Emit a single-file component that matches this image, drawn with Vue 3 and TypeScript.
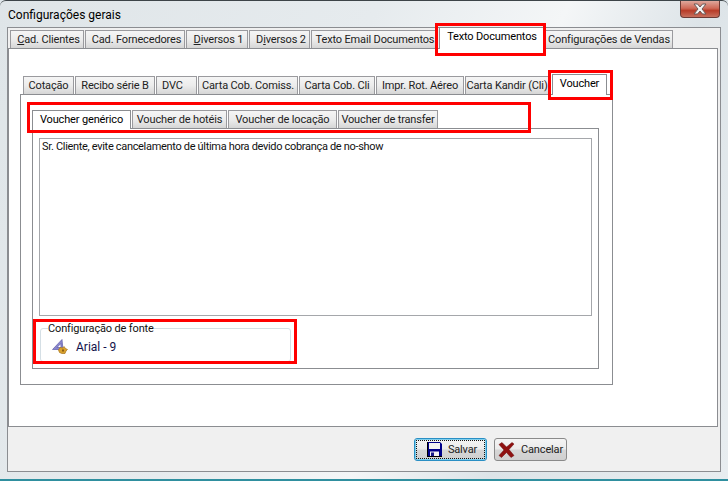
<script setup lang="ts">
interface Tab { label: string; w: number; key?: string; pre?: string; post?: string; active?: boolean; gap?: number; cls?: string }
const mainTabs: Tab[] = [
  { label: '', pre: '', key: 'C', post: 'ad. Clientes', w: 74 },
  { label: 'Cad. Fornecedores', w: 100 },
  { label: '', pre: '', key: 'D', post: 'iversos 1', w: 62 },
  { label: '', pre: 'D', key: 'i', post: 'versos 2', w: 61 },
  { label: 'Texto Email Documentos', w: 125 },
  { label: 'Texto Documentos', w: 106, active: true, gap: 3 },
  { label: 'Configurações de Vendas', w: 128, gap: 0 },
]
const subTabs: Tab[] = [
  { label: 'Cotação', w: 51 },
  { label: 'Recibo série B', w: 80 },
  { label: 'DVC', w: 41, cls: 'start' },
  { label: 'Carta Cob. Comiss.', w: 100 },
  { label: 'Carta Cob. Cli', w: 76 },
  { label: 'Impr. Rot. Aéreo', w: 88 },
  { label: 'Carta Kandir (Cli)', w: 84 },
  { label: 'Voucher', w: 55, active: true, gap: 3 },
]
const voucherTabs: Tab[] = [
  { label: 'Voucher genérico', w: 99, active: true, gap: 0 },
  { label: 'Voucher de hotéis', w: 95 },
  { label: 'Voucher de locação', w: 109 },
  { label: 'Voucher de transfer', w: 100 },
]
function tabStyle(t: Tab) {
  return { width: t.w + 'px', marginLeft: (t.gap ?? 1) + 'px' }
}
</script>

<template>
  <div class="window">
    <div class="titlebar">
      <span class="title">Configurações gerais</span>
      <button class="close" aria-label="Fechar">
        <svg width="16" height="12" viewBox="0 0 16 12">
          <path d="M2 1h3.500L8 4l2.500-3H14L10 6l4 5h-3.500L8 8l-2.500 3H2l4-5z" fill="#f4f4f4" stroke="#6b5a58" stroke-width="1"/>
        </svg>
      </button>
    </div>
    <div class="client">
      <div class="tabs tabs-main">
        <div v-for="t in mainTabs" :key="t.w" class="tab" :class="{ active: t.active }" :style="tabStyle(t)">
          <span v-if="t.key">{{ t.pre }}<u>{{ t.key }}</u>{{ t.post }}</span>
          <span v-else>{{ t.label }}</span>
        </div>
      </div>
      <div class="page page-main">
        <div class="sub">
          <div class="tabs tabs-sub">
            <div v-for="t in subTabs" :key="t.label" class="tab" :class="[t.cls, { active: t.active }]" :style="tabStyle(t)">{{ t.label }}</div>
          </div>
          <div class="page page-sub">
            <div class="tabs tabs-voucher">
              <div v-for="t in voucherTabs" :key="t.label" class="tab" :class="{ active: t.active }" :style="tabStyle(t)">{{ t.label }}</div>
            </div>
            <div class="page page-voucher">
              <div class="memo">Sr. Cliente, evite cancelamento de última hora devido cobrança de no-show</div>
              <fieldset class="group">
                <legend>Configuração de fonte</legend>
                <div class="font-row">
                  <svg width="16" height="15" viewBox="0 0 16 15">
                    <path d="M0.500 10.500 L10 0.500 L11 10.500z M5 8.500 L8.800 4.500 L9 8.500z" fill="#8a86cf" fill-rule="evenodd" stroke="#5f5ca8" stroke-width=".7"/>
                    <path d="M6.500 11 L8 8.500 L11 9 L12 7.500 L13.500 9.500 L15.500 10.500 L14 12 L13 14.500 L10 14.500 L7.500 13.500z" fill="#d9a22e" stroke="#a8741a" stroke-width=".7"/>
                    <rect x="10" y="10.500" width="2" height="2" fill="#8a5c12"/>
                  </svg>
                  <span>Arial - 9</span>
                </div>
              </fieldset>
            </div>
          </div>
        </div>
      </div>
      <div class="footer">
        <button class="btn focus">
          <span class="inner">
            <svg width="15" height="15" viewBox="0 0 15 15">
              <path d="M0 0h13l2 2v13H0z" fill="#00008a"/>
              <rect x="2" y="1" width="11" height="6" fill="#f2f2f2"/>
              <rect x="3" y="9.500" width="9" height="5.500" fill="#f2f2f2"/>
              <rect x="4" y="10.500" width="3" height="4.500" fill="#1a1a8a"/>
              <path d="M0 0h1v15H0zM0 14h15v1H0z" fill="#000"/>
            </svg>
            <span>Salvar</span>
          </span>
        </button>
        <button class="btn">
          <span class="inner">
            <svg width="17" height="16" viewBox="0 0 17 16">
              <path d="M1 2.500 L4 0.500 L8.500 5 L14 0.500 L16 2 L11 7.500 L16 13.500 L13 15.500 L8.500 10.500 L3.500 15.500 L1 13.500 L6 8z" fill="#8f1111" stroke="#6a0a0a" stroke-width=".5"/>
            </svg>
            <span>Cancelar</span>
          </span>
        </button>
      </div>
    </div>
    <div class="mark mark-a"></div>
    <div class="mark mark-b"></div>
    <div class="mark mark-c"></div>
    <div class="mark mark-d"></div>
  </div>
</template>

<style>
html, body { margin: 0; padding: 0; background: #dfe6ea; }
</style>

<style scoped>
.window {
  position: relative;
  box-sizing: border-box;
  width: 728px;
  height: 481px;
  padding: 0 7px 7px;
  display: flex;
  flex-direction: column;
  overflow: hidden;
  border-radius: 6px 6px 0 0;
  border-top: 1px solid #3d4448;
  border-bottom: 2px solid #2f8f9f;
  background: linear-gradient(115deg, #dfe5e8 0%, #e6ebee 40%, #f4f6f7 60%, #dde4e8 75%, #e8edf0 100%);
  font-family: Roboto, "Liberation Sans", Arial, sans-serif;
  font-size: 11px;
  letter-spacing: -0.15px;
  color: #111;
}
.titlebar {
  height: 26px;
  flex: none;
  display: flex;
  justify-content: space-between;
  align-items: flex-start;
}
.title {
  margin: 7px 0 0 1px;
  font-size: 12px;
  letter-spacing: 0;
  line-height: 14px;
  color: #000;
}
.close {
  box-sizing: border-box;
  width: 40px;
  height: 17px;
  margin: 0 1px 0 0;
  padding: 0;
  display: flex;
  align-items: center;
  justify-content: center;
  border: 1px solid #6d3a34;
  border-top: 0;
  border-radius: 0 0 4px 4px;
  background: linear-gradient(#dfa79c 0%, #cf6a58 45%, #b83c28 60%, #c8705e 100%);
}
.client {
  box-sizing: border-box;
  height: 447px;
  display: flex;
  flex-direction: column;
  border: 1px solid #8b8d91;
  background: #f0f0f0;
}
.tabs {
  display: flex;
  align-items: flex-end;
  flex: none;
  position: relative;
  z-index: 1;
}
.tabs-main { height: 20px; padding-left: 1px; }
.tabs-main .tab:not(.active):not(:last-child) { padding-left: 3px; }
.tabs-sub { height: 18px; padding-left: 2px; }
.tabs-voucher { height: 18px; }
.tab {
  box-sizing: border-box;
  height: 18px;
  margin-bottom: 0;
  border: 1px solid #9a9a9e;
  border-bottom: 0;
  background: linear-gradient(#f5f5f5 0%, #ececec 50%, #d6d6d6 100%);
  line-height: 18px;
  text-align: center;
  white-space: nowrap;
  overflow: hidden;
  color: #222;
}
.tab.start { text-align: left; padding-left: 5px; }
.tab.active {
  height: 22px;
  margin-bottom: -1px;
  background: #fff;
  border-color: #8b8d91;
  line-height: 18px;
  color: #000;
}
.tabs-voucher .tab.active { height: 19px; }
.tabs-sub .tab.active { height: 21px; }
.page {
  box-sizing: border-box;
  border: 1px solid #8b8d91;
  background: #fff;
}
.page-main {
  width: 710px;
  height: 379px;
  padding: 27px 0 0 11px;
}
.sub { width: 593px; }
.page-sub {
  height: 291px;
  padding: 15px 0 0 11px;
}
.page-voucher {
  width: 567px;
  height: 241px;
  padding: 9px 0 0 6px;
}
.memo {
  box-sizing: border-box;
  width: 553px;
  height: 178px;
  padding: 1px 2px;
  border: 1px solid #a5a7ab;
  line-height: 14px;
  letter-spacing: -0.32px;
  color: #111;
}
.group {
  box-sizing: border-box;
  width: 251px;
  height: 40px;
  margin: 6px 0 0 1px;
  padding: 0 0 0 11px;
  border: 1px solid #d5dfe5;
  border-radius: 3px;
}
.group legend {
  padding: 0;
  margin-left: -4px;
  line-height: 13px;
  color: #111;
}
.font-row {
  display: flex;
  align-items: center;
  gap: 8px;
  margin-top: 4px;
  font-size: 12px;
  letter-spacing: 0;
  color: #12124a;
}
.footer {
  flex: 1;
  display: flex;
  gap: 7px;
  padding: 11px 0 0 406px;
}
.btn {
  box-sizing: border-box;
  width: 73px;
  height: 23px;
  padding: 0;
  border: 1px solid #8a8a8a;
  border-radius: 3px;
  background: linear-gradient(#f4f4f4 0%, #ebebeb 48%, #d6d6d6 52%, #cfcfcf 100%);
  font: inherit;
  letter-spacing: inherit;
  color: #222;
}
.btn.focus {
  border: 1px solid #2a8fc4;
  box-shadow: inset 0 0 0 1px #7fd0ee;
}
.btn.focus .inner { outline: 1px dotted #111; outline-offset: -2px; padding-left: 3px; }
.inner {
  box-sizing: border-box;
  display: flex;
  align-items: center;
  justify-content: center;
  gap: 6px;
  height: 100%;
}
.mark {
  position: absolute;
  box-sizing: border-box;
  border: 3px solid #f00;
  z-index: 5;
  pointer-events: none;
}
.mark-a { left: 435px; top: 22px; width: 111px; height: 33px; }
.mark-b { left: 548px; top: 69px; width: 65px; height: 30px; }
.mark-c { left: 27px; top: 101px; width: 504px; height: 31px; }
.mark-d { left: 33px; top: 318px; width: 264px; height: 45px; }
</style>
